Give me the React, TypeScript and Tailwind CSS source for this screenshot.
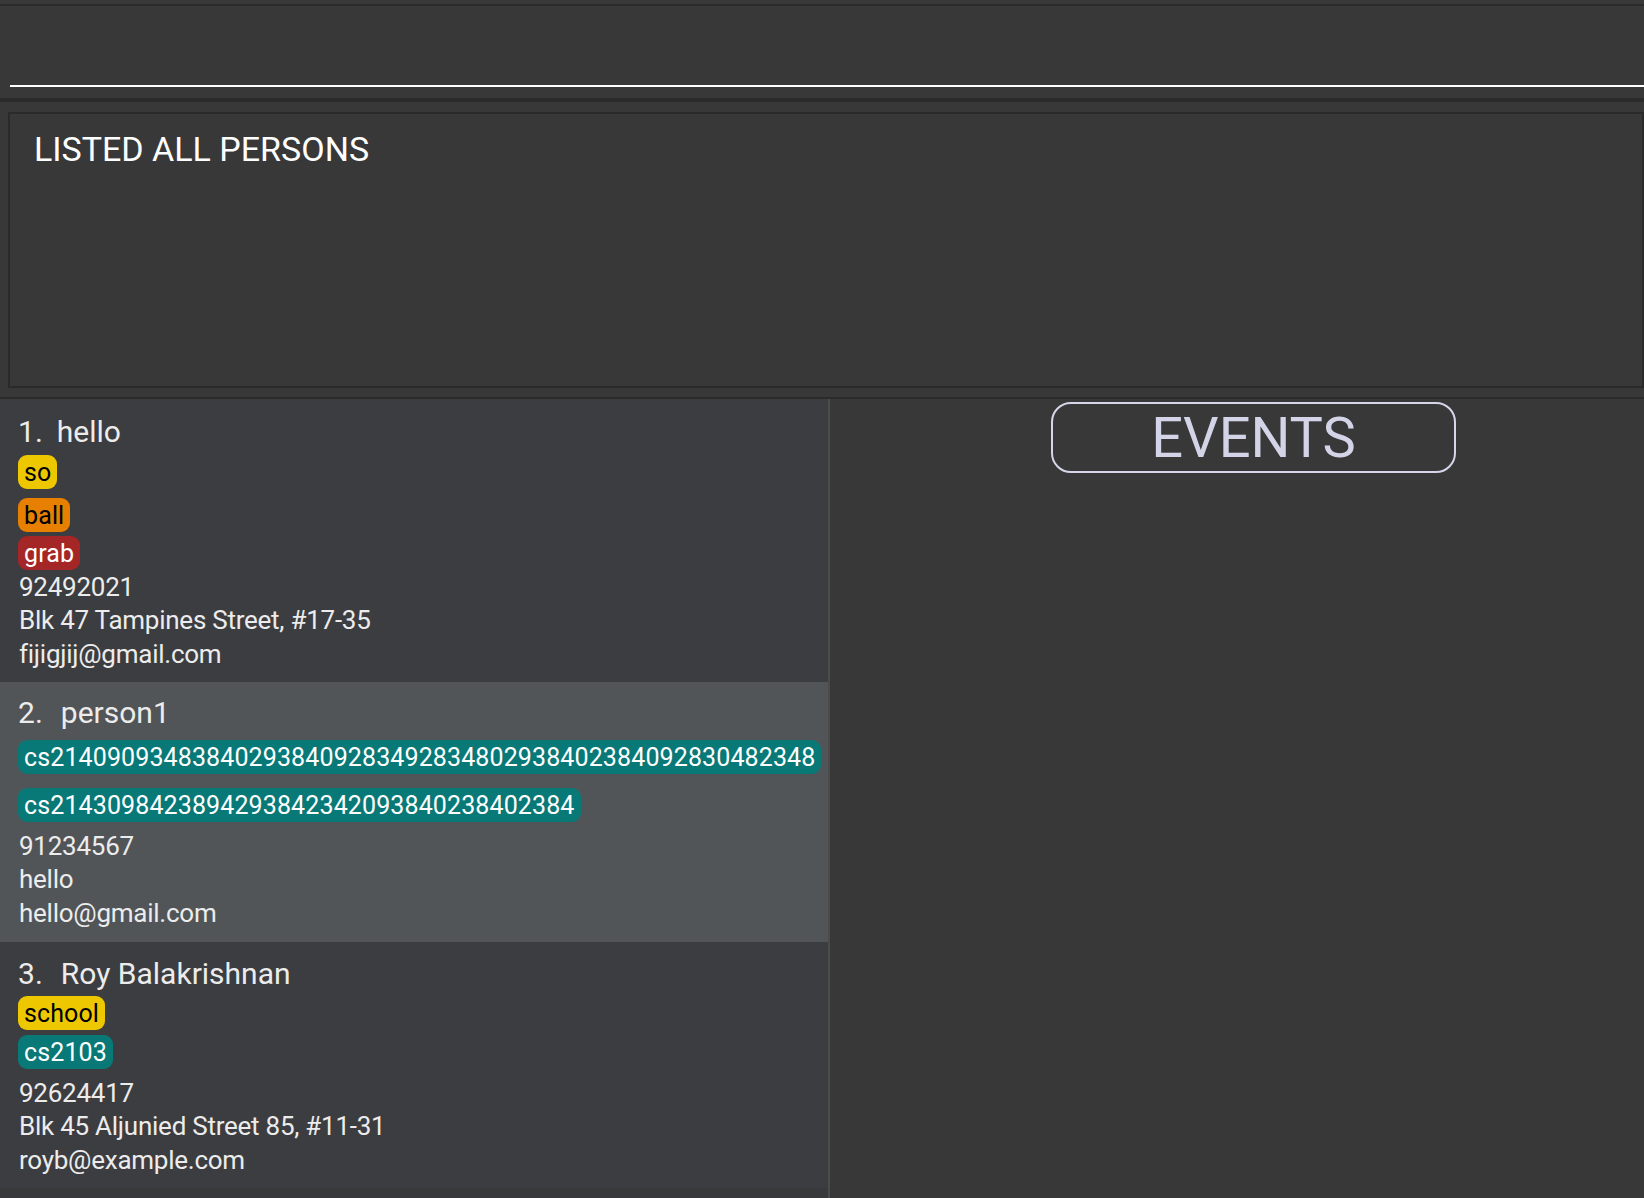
import React from "react";

type Tag = { label: string; color: string; mt: string };

function TagChip({ tag }: { tag: Tag }) {
    return (
        <div className={`${tag.mt} flex`}>
            <span className={`${tag.color} h-[34px] flex items-center px-[6px] rounded-[9px] text-[25px] tracking-[0.12px] leading-none whitespace-nowrap`}>
                {tag.label}
            </span>
        </div>
    );
}

function PersonCard({ index, name, tags, lines, pt, detailsMt, bg, h, nameGap }: {
    index: number; name: string; tags: Tag[]; lines: string[]; pt: string; detailsMt: string; bg: string; h: string; nameGap: string;
}) {
    return (
        <div className={`${bg} ${pt} ${h} px-[18px] shrink-0 text-[#ececec]`}>
            <div className="h-[41px] flex items-center text-[30px] leading-none whitespace-nowrap">
                <span>{index}.</span>
                <span className={nameGap}>{name}</span>
            </div>
            {tags.map((t, i) => <TagChip key={i} tag={t} />)}
            <div className={detailsMt}>
                {lines.map((l, i) => (
                    <div key={i} className="h-[33.5px] flex items-center text-[26px] tracking-[-0.25px] leading-none whitespace-nowrap pl-[1px]">{l}</div>
                ))}
            </div>
        </div>
    );
}

const yellow = "bg-[#edc800] text-black";
const orange = "bg-[#e77f00] text-black";
const red = "bg-[#a42626] text-white";
const teal = "bg-[#087977] text-white";

export default function App() {
    return (
        <div className="w-[1644px] h-[1198px] overflow-hidden bg-[#383838] flex flex-col font-['Roboto',sans-serif]">
            <div className="h-[4px] shrink-0" />
            <div className="h-[2px] bg-[#2b2b2b] shrink-0" />
            {/* command box */}
            <div className="h-[92px] shrink-0 pl-[10px]">
                <div className="h-[81px] border-b-2 border-white" />
            </div>
            <div className="h-[4px] bg-[#2b2b2b] shrink-0" />
            {/* result display */}
            <div className="h-[295px] shrink-0 pt-[10px] pl-[8px]">
                <div className="h-[276px] border-2 border-[#2a2a2a] pl-[24px] pt-[14px]">
                    <div className="h-[41px] flex items-center text-[34px] leading-none text-white">LISTED ALL PERSONS</div>
                </div>
            </div>
            <div className="h-[2px] bg-[#2b2b2b] shrink-0" />
            <div className="flex-1 flex min-h-0">
                <div className="w-[828px] bg-[#3c3d40] flex flex-col pt-[1px]">
                    <PersonCard
                        index={1}
                        name="hello"
                        nameGap="ml-[14px]"
                        bg="bg-[#3c3d40]"
                        pt="pt-[11px]"
                        h="h-[282px]"
                        tags={[
                            { label: "so", color: yellow, mt: "mt-[3px]" },
                            { label: "ball", color: orange, mt: "mt-[9px]" },
                            { label: "grab", color: red, mt: "mt-[4px]" },
                        ]}
                        detailsMt="mt-0"
                        lines={["92492021", "Blk 47 Tampines Street, #17-35", "fijigjij@gmail.com"]}
                    />
                    <PersonCard
                        index={2}
                        name="person1"
                        nameGap="ml-[18px]"
                        bg="bg-[#515558]"
                        pt="pt-[10px]"
                        h="h-[260px]"
                        tags={[
                            { label: "cs214090934838402938409283492834802938402384092830482348", color: teal, mt: "mt-[7px]" },
                            { label: "cs2143098423894293842342093840238402384", color: teal, mt: "mt-[14px]" },
                        ]}
                        detailsMt="mt-[7px]"
                        lines={["91234567", "hello", "hello@gmail.com"]}
                    />
                    <PersonCard
                        index={3}
                        name="Roy Balakrishnan"
                        nameGap="ml-[18px]"
                        bg="bg-[#3c3d40]"
                        pt="pt-[11px]"
                        h="h-[246px]"
                        tags={[
                            { label: "school", color: yellow, mt: "mt-[2px]" },
                            { label: "cs2103", color: teal, mt: "mt-[5px]" },
                        ]}
                        detailsMt="mt-[7px]"
                        lines={["92624417", "Blk 45 Aljunied Street 85, #11-31", "royb@example.com"]}
                    />
                    <div className="flex-1 bg-[#38393b]" />
                </div>
                <div className="w-[2px] bg-[#4b4b4b]" />
                <div className="flex-1 pt-[3px] pl-[221px]">
                    <div className="w-[405px] h-[71px] border-2 border-[#d6d6ea] rounded-[20px] flex items-center justify-center text-[56px] leading-none text-[#d4d4e8]">
                        EVENTS
                    </div>
                </div>
            </div>
        </div>
    );
}
